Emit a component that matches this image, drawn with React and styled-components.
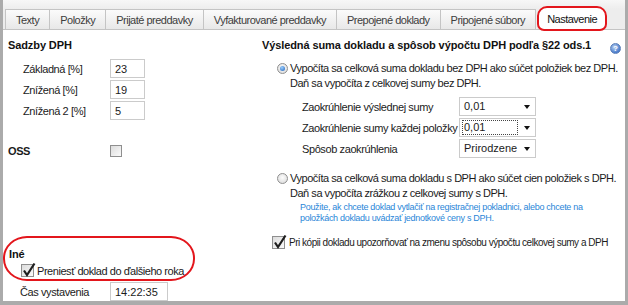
import React from 'react'
import styled, { createGlobalStyle } from 'styled-components'

const GlobalStyle = createGlobalStyle`
  html, body { margin: 0; padding: 0; background: #fff; }
  body {
    font-family: "Liberation Sans", Arial, sans-serif;
    font-size: 11px;
    color: #1b1b1b;
  }
`

const Frame = styled.div`
  width: 628px;
  height: 305px;
  box-sizing: border-box;
  display: flex;
  flex-direction: column;
  padding-top: 9px;
  background: linear-gradient(#f7f7f7, #ededed 9px);
  border: solid #ababab;
  border-width: 0 3px 4px 3px;
  overflow: hidden;
`

const TabStrip = styled.div`
  display: flex;
  align-items: flex-end;
  height: 20px;
  padding-left: 2px;
  position: relative;
  z-index: 1;
`

const Tab = styled.div`
  height: ${(p) => (p.$active ? 25 : 20)}px;
  box-sizing: border-box;
  display: flex;
  align-items: center;
  padding: 0 10px;
  margin-right: -1px;
  margin-left: ${(p) => (p.$active ? 2 : 0)}px;
  margin-bottom: ${(p) => (p.$active ? -2 : 0)}px;
  border: 1px solid #c4c4c4;
  border-bottom: none;
  background: linear-gradient(#fbfbfb, #e8e8e8);
  color: #3d3d3d;
  font-size: 11px;
  letter-spacing: -0.5px;
  white-space: nowrap;

  ${(p) =>
    p.$active &&
    `
    padding: 0 8px;
    background: #fff;
    color: #111;
    border: 2px solid #e3161c;
    border-radius: 10px 10px 7px 7px;
  `}
`

const Panel = styled.div`
  flex: 1;
  min-height: 0;
  display: flex;
  background: #fff;
  border-top: 1px solid #c4c4c4;
`

const LeftCol = styled.div`
  width: 259px;
  box-sizing: border-box;
  padding-left: 5px;
  display: flex;
  flex-direction: column;
`

const RightCol = styled.div`
  flex: 1;
  display: flex;
  flex-direction: column;
  padding-right: 4px;
`

const SectionTitle = styled.div`
  font-weight: bold;
  line-height: 14px;
  color: #111;
  letter-spacing: -0.1px;
  white-space: nowrap;
  margin-top: ${(p) => p.$top || 0}px;
`

const TitleRow = styled.div`
  display: flex;
  justify-content: space-between;
  align-items: flex-start;
  margin-top: 8px;
`

const HelpIcon = styled.span`
  width: 11px;
  height: 11px;
  margin-top: 5px;
  border-radius: 50%;
  box-sizing: border-box;
  border: 1px solid #5b7fb9;
  background: radial-gradient(circle at 40% 35%, #bcd3f3, #4a7ccb 70%);
  color: #fff;
  font-size: 8px;
  font-weight: bold;
  line-height: 9px;
  text-align: center;
`

const Stack = styled.div`
  display: flex;
  flex-direction: column;
  gap: 2px;
  margin-top: ${(p) => p.$top || 0}px;
  padding-left: ${(p) => p.$indent || 0}px;
`

const FieldRow = styled.div`
  display: flex;
  align-items: center;
  min-height: ${(p) => p.$h || 19}px;
  margin-top: ${(p) => p.$top || 0}px;
  padding-left: ${(p) => p.$indent || 0}px;
`

const Label = styled.span`
  width: ${(p) => p.$w}px;
  flex-shrink: 0;
  letter-spacing: -0.4px;
  white-space: nowrap;
  font-weight: ${(p) => (p.$bold ? 'bold' : 'normal')};
  color: #1b1b1b;
`

const TextBox = styled.div`
  width: ${(p) => p.$w}px;
  height: 19px;
  box-sizing: border-box;
  border: 1px solid #cbcbcb;
  padding: 0 4px;
  display: flex;
  align-items: center;
  background: #fff;
`

const Combo = styled.div`
  width: 77px;
  height: 19px;
  box-sizing: border-box;
  border: 1px solid #cbcbcb;
  padding: 0 5px 0 2px;
  display: flex;
  align-items: center;
  justify-content: space-between;
  background: #fff;
`

const ComboValue = styled.span`
  width: 56px;
  height: 15px;
  box-sizing: border-box;
  padding-left: 1px;
  line-height: 13px;
  border: 1px ${(p) => (p.$focused ? 'dotted #444' : 'solid transparent')};
`

const Arrow = styled.span`
  width: 0;
  height: 0;
  border-left: 3.5px solid transparent;
  border-right: 3.5px solid transparent;
  border-top: 4px solid #111;
`

const Option = styled.div`
  display: flex;
  align-items: flex-start;
  gap: 2px;
  padding-left: 15px;
  margin-top: ${(p) => p.$top}px;
  line-height: 15px;
  letter-spacing: -0.47px;
  white-space: nowrap;
`

const Radio = styled.span`
  width: 11px;
  height: 11px;
  margin-top: 2px;
  box-sizing: border-box;
  flex-shrink: 0;
  border-radius: 50%;
  border: 1px solid #8f8f8f;
  display: flex;
  align-items: center;
  justify-content: center;
  background: radial-gradient(circle at 50% 40%, #fdfdfd, #d6d6d6);

  &::after {
    content: '';
    display: ${(p) => (p.$checked ? 'block' : 'none')};
    width: 5px;
    height: 5px;
    border-radius: 50%;
    background: radial-gradient(circle at 40% 35%, #9cd0ff, #1c5fb8);
  }
`

const Hint = styled.div`
  padding-left: 38px;
  margin-top: 1px;
  color: #2a86d8;
  font-size: 9px;
  line-height: 11px;
  letter-spacing: -0.3px;
  white-space: nowrap;
`

const CheckRow = styled.div`
  display: flex;
  align-items: center;
  gap: ${(p) => p.$gap || 3}px;
  margin-top: ${(p) => p.$top || 0}px;
  padding-left: ${(p) => p.$indent || 0}px;
  font-size: ${(p) => p.$size || 11}px;
  letter-spacing: ${(p) => p.$spacing || -0.45}px;
  white-space: nowrap;
`

const Box = styled.span`
  position: relative;
  width: ${(p) => p.$size || 13}px;
  height: ${(p) => p.$size || 13}px;
  box-sizing: border-box;
  flex-shrink: 0;
  border: 1px solid #8f8f8f;
  background: linear-gradient(135deg, #dcdcdc, #fafafa);

  svg {
    position: absolute;
    left: 0;
    top: -3px;
    overflow: visible;
  }
`

const IneBox = styled.div`
  margin-top: auto;
  margin-left: -5px;
  width: 192px;
  height: 45px;
  box-sizing: border-box;
  border: 2px solid #e3161c;
  border-radius: 24px / 22px;
  padding: 9px 0 0 4px;
`

const Checkbox = ({ checked, size }) => (
  <Box $size={size}>
    {checked && (
      <svg width="14" height="15" viewBox="0 0 14 15">
        <path d="M2 8.5 L5 13 L12.5 1.5" fill="none" stroke="#1e1e1e" strokeWidth="2.2" strokeLinejoin="miter" />
      </svg>
    )}
  </Box>
)

const tabs = [
  'Texty',
  'Položky',
  'Prijaté preddavky',
  'Vyfakturované preddavky',
  'Prepojené doklady',
  'Pripojené súbory',
]

const rates = [
  ['Základná [%]', '23'],
  ['Znížená [%]', '19'],
  ['Znížená 2 [%]', '5'],
]

const rounding = [
  ['Zaokrúhlenie výslednej sumy', '0,01'],
  ['Zaokrúhlenie sumy každej položky', '0,01', true],
  ['Spôsob zaokrúhlenia', 'Prirodzene'],
]

export default function App() {
  return (
    <>
      <GlobalStyle />
      <Frame>
        <TabStrip>
          {tabs.map((t) => (
            <Tab key={t}>{t}</Tab>
          ))}
          <Tab $active>Nastavenie</Tab>
        </TabStrip>

        <Panel>
          <LeftCol>
            <SectionTitle $top={8}>Sadzby DPH</SectionTitle>
            <Stack $top={7}>
              {rates.map(([label, value]) => (
                <FieldRow key={label} $indent={15}>
                  <Label $w={87}>{label}</Label>
                  <TextBox $w={35}>{value}</TextBox>
                </FieldRow>
              ))}
            </Stack>

            <FieldRow $top={24} $h={14}>
              <Label $w={102} $bold>OSS</Label>
              <Checkbox size={12} />
            </FieldRow>

            <IneBox>
              <SectionTitle>Iné</SectionTitle>
              <CheckRow $top={3} $indent={12}>
                <Checkbox checked />
                Preniesť doklad do ďalšieho roka
              </CheckRow>
            </IneBox>

            <FieldRow $top={1} $indent={12}>
              <Label $w={90}>Čas vystavenia</Label>
              <TextBox $w={58}>14:22:35</TextBox>
            </FieldRow>
          </LeftCol>

          <RightCol>
            <TitleRow>
              <SectionTitle>Výsledná suma dokladu a spôsob výpočtu DPH podľa §22 ods.1</SectionTitle>
              <HelpIcon>?</HelpIcon>
            </TitleRow>

            <Option $top={7}>
              <Radio $checked />
              <span>
                Vypočíta sa celková suma dokladu bez DPH ako súčet položiek bez DPH.
                <br />
                Daň sa vypočíta z celkovej sumy bez DPH.
              </span>
            </Option>

            <Stack $top={6} $indent={40}>
              {rounding.map(([label, value, focused]) => (
                <FieldRow key={label}>
                  <Label $w={157}>{label}</Label>
                  <Combo>
                    <ComboValue $focused={focused}>{value}</ComboValue>
                    <Arrow />
                  </Combo>
                </FieldRow>
              ))}
            </Stack>

            <Option $top={13}>
              <Radio />
              <span>
                Vypočíta sa celková suma dokladu s DPH ako súčet cien položiek s DPH.
                <br />
                Daň sa vypočíta zrážkou z celkovej sumy s DPH.
              </span>
            </Option>
            <Hint>
              Použite, ak chcete doklad vytlačiť na registračnej pokladnici, alebo chcete na
              <br />
              položkách dokladu uvádzať jednotkové ceny s DPH.
            </Hint>

            <CheckRow $top={12} $indent={10} $gap={4} $size={10} $spacing={-0.48}>
              <Checkbox checked />
              Pri kópii dokladu upozorňovať na zmenu spôsobu výpočtu celkovej sumy a DPH
            </CheckRow>
          </RightCol>
        </Panel>
      </Frame>
    </>
  )
}
